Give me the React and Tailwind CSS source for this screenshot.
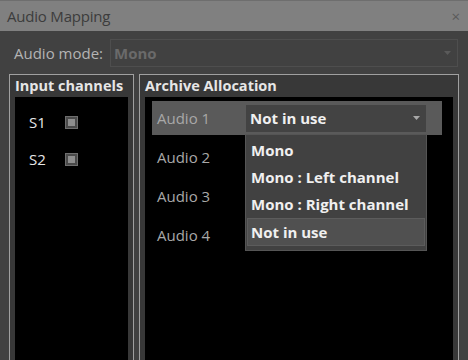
import React from "react";

const font = { fontFamily: '"Open Sans", "Noto Sans", sans-serif' };

function Check() {
  return (
    <div className="w-[13px] h-[13px] border border-[#6e6e6e] bg-[#4a4a4a] flex items-center justify-center">
      <div className="w-[7px] h-[7px] bg-[#8e8e8e]" />
    </div>
  );
}

function Arrow({ color }) {
  return (
    <svg width="7" height="4" viewBox="0 0 7 4">
      <path d="M0 0 H7 L3.5 4 Z" fill={color} />
    </svg>
  );
}

export default function App() {
  return (
    <div className="w-[468px] h-[360px] bg-[#414141] overflow-hidden relative" style={font}>
      <div className="h-[31px] bg-[#808080] border-t border-[#6e6e6e] flex items-center justify-between pl-[7px] pr-[8px]">
        <span className="text-[15px] text-[#3c3c3c] tracking-[-0.2px]">Audio Mapping</span>
        <span className="text-[15px] text-[#5a5a5a] leading-none">×</span>
      </div>
      <div className="flex items-center mt-[8px] pl-[14px] pr-[10px]">
        <span className="text-[15px] text-[#b4b4b4] w-[96px]">Audio mode:</span>
        <div className="flex-1 h-[28px] border border-[#4e4e4e] flex items-center justify-between pl-[3px] pr-[6px]">
          <span className="text-[15px] font-bold text-[#6a6a6a]">Mono</span>
          <Arrow color="#5a5a5a" />
        </div>
      </div>
      <div className="flex gap-[5px] mt-[7px] px-[9px]">
        <div className="w-[125px] h-[300px] border border-[#a0a0a0] bg-[#383838] px-[5px] flex flex-col">
          <div className="h-[22px] text-[14.5px] font-bold text-[#e6e6e6] leading-[21px] whitespace-nowrap">Input channels</div>
          <div className="flex-1 bg-black pt-[19px] pl-[14px]">
            <div className="flex items-center h-[13px] gap-[21px]">
              <span className="text-[15px] text-[#e6e6e6] w-[15px]">S1</span>
              <Check />
            </div>
            <div className="flex items-center h-[13px] gap-[21px] mt-[24px]">
              <span className="text-[15px] text-[#e6e6e6] w-[15px]">S2</span>
              <Check />
            </div>
          </div>
        </div>
        <div className="w-[320px] h-[300px] border border-[#a0a0a0] bg-[#383838] px-[5px] flex flex-col">
          <div className="h-[22px] text-[14.5px] font-bold text-[#e6e6e6] leading-[21px] whitespace-nowrap">Archive Allocation</div>
          <div className="flex-1 bg-black pt-[4px] pl-[7px] pr-[11px] flex flex-col gap-[5px]">
            <div className="h-[34px] bg-[#5a5a5a] flex items-center pl-[5px]">
              <span className="text-[15px] text-[#a8a8a8] w-[89px]">Audio 1</span>
              <div className="w-[180px] h-[27px] bg-[#434343] flex items-center justify-between pl-[4px] pr-[6px]">
                <span className="text-[15px] font-bold text-[#f0f0f0]">Not in use</span>
                <Arrow color="#a8a8a8" />
              </div>
            </div>
            {["Audio 2", "Audio 3", "Audio 4"].map((a) => (
              <div key={a} className="h-[34px] flex items-center pl-[5px]">
                <span className="text-[15px] text-[#a8a8a8]">{a}</span>
              </div>
            ))}
          </div>
        </div>
      </div>
      <div className="absolute left-[245px] top-[134px] w-[182px] h-[117px] bg-[#414141] border border-[#555555] pt-[2px] px-[1px]">
        {["Mono", "Mono : Left channel", "Mono : Right channel"].map((t) => (
          <div key={t} className="h-[27px] flex items-center pl-[4px] text-[15px] font-bold text-[#f0f0f0] whitespace-nowrap">{t}</div>
        ))}
        <div className="h-[28px] flex items-center pl-[3px] text-[15px] font-bold text-[#f0f0f0] bg-[#505050] border border-[#5c5c5c]">Not in use</div>
      </div>
    </div>
  );
}
